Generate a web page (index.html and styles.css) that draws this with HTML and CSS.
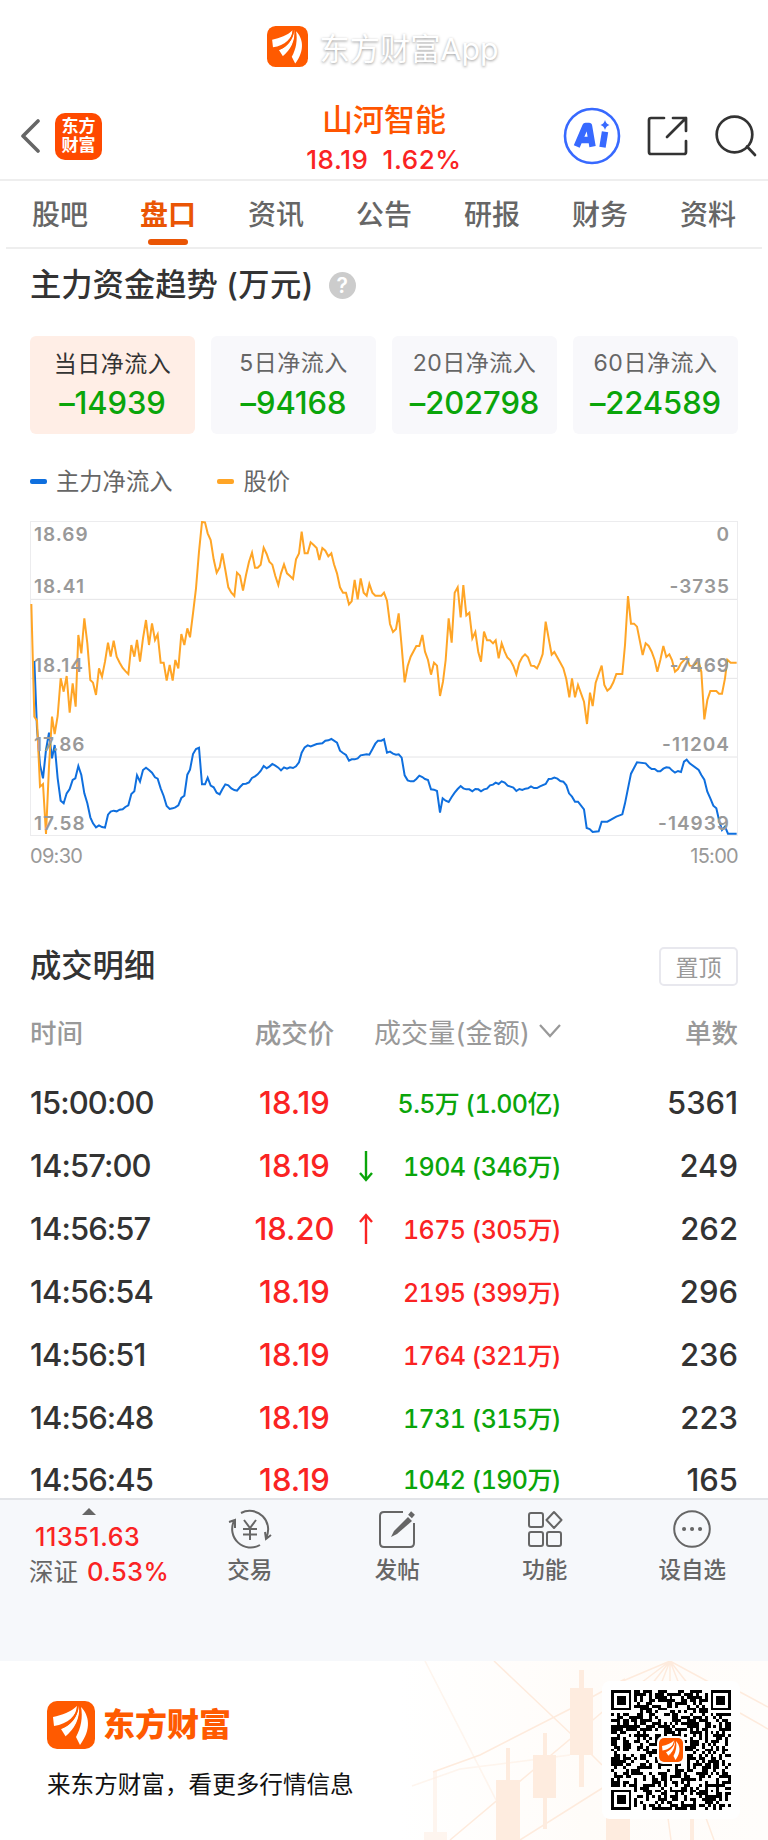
FILE: index.html
```html
<!DOCTYPE html>
<html lang="zh-CN">
  <head>
    <meta charset="UTF-8" />
    <meta name="viewport" content="width=device-width, initial-scale=1.0" />
    <title>山河智能 - 盘口</title>
    <link rel="stylesheet" href="styles.css">
  </head>
  <body>
    <svg class="defs" width="0" height="0">
      <symbol id="logo" viewBox="0 0 48 48">
        <rect width="48" height="48" rx="10" fill="#ff5a00" />
        <path d="M6 16C15 14 24 11 30 5C30 14 21 23 7 25Z" fill="#fff" />
        <path d="M34 6C42 14 45 28 33 44L29 36C34 27 36 16 34 6Z" fill="#fff" />
        <path d="M31.5 5C31 15 24 25 14 28L19 36C29 28 34 15 32 5Z" fill="#fff" />
        <path d="M31 5C30 16 22 25 11 28M33 5C34 18 28 29 18 37" fill="none" stroke="#ff5a00" stroke-width="1.8" />
      </symbol>
    </svg>

    <div class="app-title">
      <svg class="app-logo"><use href="#logo" /></svg>
      <span>东方财富App</span>
    </div>

    <header>
      <div class="header-left">
        <svg width="20" height="34" viewBox="0 0 20 34"><path d="M18 2L3 17L18 32" fill="none" stroke="#666" stroke-width="3.6" stroke-linecap="round" stroke-linejoin="round" /></svg>
        <div class="badge">东方<br />财富</div>
      </div>
      <div class="stock">
        <div class="stock-name">山河智能</div>
        <div class="stock-price"><span>18.19</span><span>1.62%</span></div>
      </div>
      <div class="header-icons">
        <svg width="58" height="58" viewBox="0 0 58 58">
          <circle cx="29" cy="29" r="27" fill="#fff" stroke="#3769ff" stroke-width="2.6" />
          <g fill="none" stroke="#3769ff" stroke-width="6.400" stroke-linecap="square" stroke-linejoin="round">
            <path d="M15 36.500L22.500 19H26L29 36.500M19 33H26" />
            <path d="M41.500 28L40 37" />
          </g>
          <path d="M42 13Q43 17 46.500 18Q43 19 42 23Q41 19 37.500 18Q41 17 42 13Z" fill="#3769ff" />
        </svg>
        <svg width="42" height="42" viewBox="0 0 42 42">
          <path d="M17 3H4Q2 3 2 5V37Q2 39 4 39H37Q39 39 39 37V26M26 3H39V16M39 3L20 22" fill="none" stroke="#333" stroke-width="2.700" stroke-linecap="round" stroke-linejoin="round" />
        </svg>
        <svg width="42" height="42" viewBox="0 0 42 42">
          <circle cx="19.500" cy="19.500" r="17.800" fill="none" stroke="#333" stroke-width="2.700" />
          <path d="M32 31.500L40 40" stroke="#333" stroke-width="2.700" stroke-linecap="round" />
        </svg>
      </div>
    </header>

    <nav>
      <a>股吧</a>
      <a class="active">盘口</a>
      <a>资讯</a>
      <a>公告</a>
      <a>研报</a>
      <a>财务</a>
      <a>资料</a>
    </nav>

    <section class="trend">
      <h2>主力资金趋势 <span class="unit">(万元)</span><span class="help">?</span></h2>
      <div class="cards">
        <div class="card selected"><p>当日净流入</p><strong>–14939</strong></div>
        <div class="card"><p>5日净流入</p><strong>–94168</strong></div>
        <div class="card"><p>20日净流入</p><strong>–202798</strong></div>
        <div class="card"><p>60日净流入</p><strong>–224589</strong></div>
      </div>
      <div class="legend">
        <span class="flow">主力净流入</span>
        <span class="price">股价</span>
      </div>
      <div class="chart">
        <svg width="708" height="315" viewBox="30 33 2124 945" fill="none">
          <path d="M30 268H2154M30 505H2154M30 741H2154" stroke="#e4e4e6" stroke-width="3" />
          <rect x="31.500" y="34.500" width="2121" height="942" stroke="#ececee" stroke-width="3" />
          <polyline class="line-flow" points="43,453 51,655 60,765 69,805 78,720 87,668 96,745 104,705 113,805 122,872 131,880 140,850 149,837 158,810 166,805 175,768 184,795 193,850 202,880 211,922 219,940 228,952 237,946 246,951 255,953 264,914 272,905 281,902 290,904 299,899 308,898 316,891 325,886 334,852 343,844 351,796 360,815 369,780 378,773 387,780 396,788 405,802 413,806 422,835 431,858 440,888 449,897 458,895 466,892 475,886 484,864 493,857 502,794 510,779 519,732 528,717 537,713 546,823 555,823 563,803 572,827 581,832 590,848 599,853 607,838 616,823 625,826 634,835 643,840 651,842 660,831 669,822 678,821 687,817 696,804 705,799 713,793 722,783 731,768 740,775 749,769 757,762 766,767 775,773 783,781 792,772 801,776 810,772 819,774 828,769 837,757 845,728 854,712 863,706 872,709 890,702 907,700 916,692 925,691 934,687 951,698 960,722 969,729 978,735 987,752 995,748 1004,748 1013,745 1022,736 1040,733 1048,734 1057,718 1066,701 1074,692 1084,692 1092,688 1101,728 1110,725 1119,731 1128,734 1136,733 1145,743 1154,796 1163,811 1172,814 1181,814 1189,807 1198,797 1207,801 1215,807 1224,810 1233,838 1242,839 1251,843 1260,908 1268,865 1277,872 1286,876 1295,861 1304,848 1313,837 1322,828 1330,835 1339,838 1348,838 1357,844 1366,837 1375,838 1383,844 1392,838 1401,836 1410,826 1419,824 1427,818 1436,822 1445,814 1454,818 1463,827 1480,833 1489,843 1498,837 1507,840 1516,836 1524,835 1533,829 1542,834 1551,834 1560,829 1577,822 1586,807 1595,806 1603,803 1612,806 1621,813 1630,815 1639,826 1647,850 1656,860 1665,875 1674,875 1692,898 1700,954 1709,957 1718,966 1736,964 1745,935 1762,935 1789,920 1807,913 1815,880 1824,835 1833,791 1842,774 1851,757 1877,760 1886,770 1895,777 1904,777 1913,784 1921,784 1930,776 1939,772 1948,773 1956,781 1965,788 1974,783 1983,786 1992,755 2000,749 2009,760 2036,780 2044,795 2053,809 2062,845 2071,865 2080,887 2089,895 2097,930 2106,960 2115,950 2124,971 2150,971" />
          <polyline class="line-price" points="34,282 43,620 51,632 60,830 69,822 78,972 87,770 96,620 104,672 113,618 122,505 131,545 140,498 149,608 158,520 167,590 175,375 184,430 193,325 202,400 211,510 219,518 228,555 237,475 246,500 255,455 264,398 272,440 281,392 290,440 299,458 308,474 317,484 325,492 334,405 343,440 351,390 360,455 369,385 378,330 387,405 396,340 405,390 413,373 422,458 431,458 440,512 449,465 458,512 466,450 475,475 484,372 493,405 502,355 510,382 519,310 528,235 537,125 546,36 555,37 563,70 572,90 581,148 590,188 599,172 607,130 616,180 625,232 634,248 643,258 651,188 660,197 669,242 678,195 687,155 696,128 705,173 713,173 722,164 731,113 740,132 748,155 757,164 766,198 775,225 783,190 792,163 801,190 810,198 819,207 828,148 837,130 845,65 854,130 863,130 872,97 881,105 890,114 898,150 907,114 916,122 925,139 934,130 942,163 951,190 960,232 969,248 978,248 987,283 995,274 1004,210 1013,268 1022,205 1031,248 1040,257 1048,222 1057,248 1066,257 1084,257 1092,248 1101,272 1110,342 1119,366 1128,357 1136,310 1145,410 1154,517 1163,468 1172,440 1189,408 1198,408 1207,375 1215,425 1224,450 1233,494 1242,458 1251,467 1260,558 1269,515 1277,450 1286,325 1295,398 1304,248 1313,232 1322,322 1330,225 1339,316 1348,308 1357,385 1366,366 1375,427 1383,455 1392,365 1401,391 1410,391 1419,400 1427,391 1436,445 1445,400 1454,425 1462,442 1471,451 1480,468 1489,493 1498,458 1507,441 1515,433 1524,442 1533,467 1542,468 1551,475 1559,458 1568,432 1577,335 1586,385 1595,434 1603,426 1621,458 1630,475 1639,508 1648,562 1656,505 1665,562 1674,525 1692,575 1701,642 1710,548 1718,588 1727,518 1736,492 1745,467 1753,525 1762,542 1771,534 1780,517 1789,492 1807,492 1815,405 1824,258 1833,341 1842,341 1851,350 1868,435 1877,400 1886,408 1895,425 1904,450 1912,485 1921,450 1930,408 1939,441 1948,433 1956,450 1965,485 1974,477 1983,460 2000,442 2009,467 2018,468 2036,455 2044,485 2053,628 2062,570 2071,543 2089,543 2097,551 2106,551 2115,505 2122,449 2132,458 2150,458" />
        </svg>
        <div class="axis axis-left"><span>18.69</span><span>18.41</span><span>18.14</span><span>17.86</span><span>17.58</span></div>
        <div class="axis axis-right"><span>0</span><span>-3735</span><span>-7469</span><span>-11204</span><span>-14939</span></div>
      </div>
      <div class="times"><span>09:30</span><span>15:00</span></div>
    </section>

    <section class="deals">
      <div class="deals-head">
        <h2>成交明细</h2>
        <button>置顶</button>
      </div>
      <table>
        <thead>
          <tr>
            <th class="time">时间</th>
            <th class="deal-price">成交价</th>
            <th class="arrow"></th>
            <th class="volume"><div>成交量(金额)<svg width="22" height="14" viewBox="0 0 22 14"><path d="M1 1L11 12L21 1" fill="none" stroke="#999" stroke-width="2.200" /></svg></div></th>
            <th class="count">单数</th>
          </tr>
        </thead>
        <tbody id="deal-rows"></tbody>
      </table>
    </section>

    <div class="toolbar">
      <div class="index">
        <i class="triangle"></i>
        <div class="index-value">11351.63</div>
        <div class="index-name">深证 <span>0.53%</span></div>
      </div>
      <div class="tool">
        <svg viewBox="0 0 44 40">
          <path d="M13 4A18.500 18.500 0 0 1 38 29M32 36A18.500 18.500 0 0 1 6 12M1 13L7 11V19M43 26L38 30L37 23" />
          <path d="M16 11L22 19L28 11M22 19V31M15 20H29M15 25.500H29" />
        </svg>
        <span>交易</span>
      </div>
      <div class="tool">
        <svg viewBox="0 0 44 40">
          <path d="M28 3H9Q5 3 5 7V34Q5 38 9 38H35Q39 38 39 34V14" />
          <path d="M35 7.500L38 4" stroke-width="5" />
          <path d="M33 8L37 12L22 25L16 28L19 22Z" fill="#666" stroke="none" />
        </svg>
        <span>发帖</span>
      </div>
      <div class="tool">
        <svg viewBox="0 0 44 40">
          <rect x="6" y="4" width="14" height="14" rx="2" />
          <rect x="6" y="23" width="14" height="14" rx="2" />
          <rect x="24" y="23" width="14" height="14" rx="2" />
          <path d="M31 3L38.500 11L31 19L23.500 11Z" stroke-linejoin="round" />
        </svg>
        <span>功能</span>
      </div>
      <div class="tool">
        <svg viewBox="0 0 44 40">
          <circle cx="22" cy="20" r="17.800" />
          <path d="M14 20H14.100M22 20H22.100M30 20H30.100" stroke-width="4" stroke-linecap="round" />
        </svg>
        <span>设自选</span>
      </div>
    </div>

    <footer>
      <svg class="footer-bg" width="368" height="179" viewBox="0 0 368 179">
        <defs>
          <linearGradient id="fade"><stop offset="0" stop-color="#fff" /><stop offset="0.500" stop-color="#fffcf9" /><stop offset="1" stop-color="#fffdfb" /></linearGradient>
        </defs>
        <rect width="368" height="179" fill="url(#fade)" />
        <g fill="none" stroke="#feebdd" stroke-width="1.500">
          <path d="M94 0L170 72L202 104M33 111L80 94L170 48L225 18M50 179L225 32M120 179L204 126M270 0L218 22M270 0L233 28M270 0L248 28M270 0L259 28M270 0V28M270 0L281 28M270 0L292 28M270 0L318 26M340 31L368 46M340 52L368 68M268 157L271 179M306 157L314 179" />
          <path d="M25 0L96 139M12 125L60 108L170 94" opacity="0.500" />
        </g>
        <g fill="#feecdf">
          <path d="M179 9H184V27H193V94H184V126H179V94H170V27H179ZM143 72H147V94H156V137H147V168H143V137H133V94H143ZM106 87H110V119H120V179H96V119H106ZM206 157H230V179H206ZM290 157H294V179H290Z" />
          <path d="M33 110H37V171H47V179H24V171H33Z" opacity="0.500" />
        </g>
      </svg>
      <div class="brand">
        <div class="brand-name"><svg><use href="#logo" /></svg>东方财富</div>
        <p>来东方财富，看更多行情信息</p>
      </div>
      <div class="qr">
        <svg id="qr" width="120" height="120" viewBox="0 0 41 41" shape-rendering="crispEdges"></svg>
        <svg class="qr-logo"><use href="#logo" /></svg>
      </div>
    </footer>

    <script>
      const deals = [
        ["15:00:00", "18.19", "", "5.5万 (1.00亿)", "5361", "down"],
        ["14:57:00", "18.19", "down", "1904 (346万)", "249", "down"],
        ["14:56:57", "18.20", "up", "1675 (305万)", "262", "up"],
        ["14:56:54", "18.19", "", "2195 (399万)", "296", "up"],
        ["14:56:51", "18.19", "", "1764 (321万)", "236", "up"],
        ["14:56:48", "18.19", "", "1731 (315万)", "223", "down"],
        ["14:56:45", "18.19", "", "1042 (190万)", "165", "down"],
      ];
      const arrows = {
        "": "",
        down: '<svg class="down" width="14" height="32" viewBox="0 0 14 32"><path d="M7 1V29M1 23L7 30L13 23" /></svg>',
        up: '<svg class="up" width="14" height="32" viewBox="0 0 14 32"><path d="M7 31V3M1 9L7 2L13 9" /></svg>',
      };
      document.getElementById("deal-rows").innerHTML = deals
        .map(
          ([time, price, arrow, volume, count, side]) => `<tr>
            <td class="time">${time}</td>
            <td class="deal-price">${price}</td>
            <td class="arrow">${arrows[arrow]}</td>
            <td class="volume ${side}">${volume}</td>
            <td class="count">${count}</td>
          </tr>`
        )
        .join("");

      // QR code: three finder squares, one alignment square, data modules between
      const size = 41;
      let seed = 20240;
      let path = "";
      function square(x, y, n, px, py) {
        const d = Math.max(Math.abs(px - x), Math.abs(py - y));
        return d <= n ? d : -1;
      }
      for (let y = 0; y < size; y++) {
        for (let x = 0; x < size; x++) {
          seed = (seed * 1103515245 + 12345) % 2147483648;
          let on = seed / 2147483648 < 0.5;
          [[3, 3], [37, 3], [3, 37]].forEach(([cx, cy]) => {
            const d = square(cx, cy, 4, x, y);
            if (d >= 0) on = d !== 4 && d !== 2;
          });
          const a = square(34, 34, 2, x, y);
          if (a >= 0) on = a !== 1;
          if (on) path += `M${x} ${y}h1v1h-1z`;
        }
      }
      document.getElementById("qr").innerHTML = `<path d="${path}" />`;
    </script>
  </body>
</html>
```
FILE: styles.css
```css
* {
  box-sizing: border-box;
}
body {
  margin: 0;
  width: 768px;
  height: 1840px;
  overflow: hidden;
  display: flex;
  flex-direction: column;
  background: #fff;
  color: #333;
  font-family: Inter, "Noto Sans CJK SC", sans-serif;
}
h2,
p {
  margin: 0;
}
.defs {
  position: absolute;
}
.app-title {
  height: 96px;
  display: flex;
  align-items: center;
  justify-content: center;
  gap: 11px;
  padding: 0 2px 3px 0;
  font-size: 30.300px;
  color: #fff;
  text-shadow: 0 1px 3px rgba(0, 0, 0, 0.4);
}
.app-logo {
  width: 41px;
  height: 41px;
}
header {
  height: 85px;
  display: grid;
  grid-template-columns: 1fr 200px 1fr;
  align-items: center;
  border-bottom: 2px solid #eee;
}
.header-left {
  display: flex;
  align-items: center;
  gap: 15px;
  padding-left: 20px;
  margin-top: -3px;
}
.badge {
  width: 47px;
  height: 47px;
  padding-top: 4px;
  border-radius: 10px;
  background: #ff4a00;
  color: #fff;
  font-size: 17px;
  line-height: 19px;
  font-weight: 700;
  text-align: center;
}
.stock {
  padding-top: 3px;
  text-align: center;
}
.stock-name {
  font-size: 31px;
  line-height: 42px;
  font-weight: 500;
  color: #ff5500;
}
.stock-price {
  display: flex;
  justify-content: center;
  gap: 14px;
  font-size: 26px;
  line-height: 38px;
  font-weight: 500;
  letter-spacing: 0.6px;
  color: #fa2323;
}
.header-icons {
  display: flex;
  align-items: center;
  justify-content: flex-end;
  gap: 26px;
  padding-right: 11px;
  margin-top: -3px;
}
nav {
  height: 68px;
  margin: 0 6px;
  display: flex;
  border-bottom: 2px solid #eee;
}
nav a {
  position: relative;
  flex: 1;
  text-align: center;
  font-size: 28px;
  line-height: 68px;
  font-weight: 500;
  color: #666;
}
nav .active {
  color: #ea5504;
  font-weight: 700;
}
nav .active::after {
  content: "";
  position: absolute;
  left: 50%;
  bottom: 2px;
  width: 40px;
  height: 6px;
  margin-left: -20px;
  border-radius: 3px;
  background: #ea5504;
}
h2 {
  font-size: 31.300px;
  line-height: 40px;
  font-weight: 500;
}
.trend {
  height: 697px;
  padding: 16px 30px 0;
}
.trend h2 {
  display: flex;
  align-items: center;
  height: 40px;
  white-space: pre;
}
.unit {
  letter-spacing: 0.5px;
}
.help {
  width: 27px;
  height: 27px;
  margin-left: 15px;
  border-radius: 50%;
  background: #ccc;
  color: #fff;
  font-size: 21px;
  line-height: 27px;
  font-weight: 600;
  text-align: center;
}
.cards {
  display: grid;
  grid-template-columns: repeat(4, 1fr);
  gap: 16px;
  margin-top: 31px;
}
.card {
  height: 98px;
  padding-top: 10px;
  border-radius: 6px;
  background: #f8f8fb;
  text-align: center;
}
.card p {
  font-size: 23px;
  line-height: 34px;
  letter-spacing: 0.5px;
  color: #666;
}
.card strong {
  display: block;
  font-size: 31px;
  line-height: 46px;
  font-weight: 500;
  letter-spacing: -0.1px;
  color: #0aa50a;
}
.card.selected {
  background: #ffeee6;
}
.card.selected p {
  position: relative;
  top: 1px;
  color: #333;
}
.legend {
  display: flex;
  gap: 45px;
  margin-top: 31px;
  font-size: 23.300px;
  line-height: 34px;
  color: #666;
}
.legend span::before {
  content: "";
  display: inline-block;
  width: 17px;
  height: 5px;
  margin-right: 9px;
  border-radius: 2px;
  vertical-align: 6px;
}
.flow::before {
  background: #0f6fde;
}
.price::before {
  background: #ffa526;
}
.chart {
  position: relative;
  height: 315px;
  margin-top: 22px;
}
.line-flow {
  stroke: #0f6fde;
  stroke-width: 6;
}
.line-price {
  stroke: #ffa526;
  stroke-width: 6;
}
/* value labels lie over the lines */
.axis {
  position: absolute;
  top: 0;
  bottom: 0;
  display: flex;
  flex-direction: column;
  font-size: 19px;
  line-height: 28px;
  font-weight: 600;
  letter-spacing: 1px;
  color: #999;
}
.axis span {
  margin-bottom: 51px;
}
.axis span:first-child {
  margin-bottom: 24px;
}
.axis-left {
  left: 4px;
}
.axis-right {
  right: 8px;
  text-align: right;
}
.times {
  display: flex;
  justify-content: space-between;
  margin-top: 6px;
  font-size: 20px;
  line-height: 28px;
  letter-spacing: -0.700px;
  color: #999;
}
.deals {
  height: 552px;
  padding: 0 30px;
}
.deals-head {
  display: flex;
  justify-content: space-between;
  align-items: center;
  height: 40px;
}
button {
  width: 79px;
  height: 39px;
  padding: 0;
  border: 2px solid #e8e8ee;
  border-radius: 5px;
  background: #fff;
  color: #999;
  font: 23px/33px "Noto Sans CJK SC", sans-serif;
}
table {
  width: 708px;
  margin-top: 15px;
  table-layout: fixed;
  border-collapse: collapse;
}
th,
td {
  height: 63px;
  padding: 0;
  font-weight: 500;
  font-size: 31px;
  text-align: left;
}
th {
  height: 62px;
  padding-bottom: 2px;
  font-size: 26.500px;
  color: #999;
}
tbody tr:first-child td {
  height: 71px;
  padding-top: 8px;
}
tbody tr:last-child td {
  height: 49px;
  padding: 13px 0 0;
  line-height: 36px;
  vertical-align: top;
}
.time {
  width: 208px;
}
td.time {
  letter-spacing: -0.9px;
}
.deal-price {
  width: 113px;
  text-align: center;
}
td.deal-price {
  color: #fa2323;
}
.arrow {
  width: 30px;
  text-align: center;
}
.arrow svg {
  display: block;
  margin: 0 auto;
  fill: none;
  stroke: currentColor;
  stroke-width: 2.400px;
}
.volume {
  width: 180px;
  text-align: right;
  white-space: nowrap;
}
td.volume {
  padding-bottom: 2px;
  font-size: 25px;
  font-variant-numeric: tabular-nums;
  letter-spacing: -0.6px;
}
th.volume {
  font-weight: 400;
}
.volume div {
  display: flex;
  align-items: center;
  justify-content: flex-end;
  gap: 9px;
  font-size: 27px;
  letter-spacing: 0.2px;
}
.volume div svg {
  flex: none;
}
.count {
  text-align: right;
}
.up {
  color: #fa2323;
}
.down {
  color: #0aa50a;
}
.toolbar {
  height: 163px;
  flex: none;
  display: flex;
  padding-top: 8px;
  border-top: 2px solid #e2e4e8;
  background: #f6f8fb;
  color: #666;
}
.index {
  width: 176px;
  padding-left: 29px;
  font-weight: 500;
}
.triangle {
  display: block;
  width: 0;
  margin-left: 53px;
  border: 7px solid transparent;
  border-top: 0;
  border-bottom-color: #666;
}
.index-value {
  margin: 5px 0 0 6px;
  font-size: 25px;
  line-height: 35px;
  letter-spacing: 0.6px;
  color: #fa2323;
}
.index-name {
  margin-top: -1px;
  font-size: 24.500px;
  line-height: 36px;
  font-weight: 400;
  white-space: nowrap;
}
.index-name span {
  margin-left: 2px;
  font-size: 25.500px;
  font-weight: 500;
  letter-spacing: 0.4px;
  color: #fa2323;
}
.tool {
  width: 147.500px;
  display: flex;
  flex-direction: column;
  align-items: center;
  font-size: 22.500px;
  line-height: 34px;
  font-weight: 500;
}
.tool svg {
  width: 44px;
  height: 40px;
  margin: 1px 0 4px;
  fill: none;
  stroke: #666;
  stroke-width: 2;
}
footer {
  position: relative;
  height: 179px;
  flex: none;
  display: flex;
  justify-content: space-between;
  padding: 0 28px 0 47px;
}
.footer-bg {
  position: absolute;
  right: 0;
  top: 0;
}
.brand {
  padding-top: 40px;
}
.brand-name {
  display: flex;
  align-items: center;
  gap: 8px;
  font-size: 32px;
  line-height: 48px;
  font-weight: 900;
  color: #ff5a00;
}
.brand-name svg {
  width: 48px;
  height: 48px;
}
.brand p {
  margin-top: 19px;
  font-size: 23.600px;
  line-height: 34px;
  color: #111;
}
.qr {
  position: relative;
  width: 138px;
  height: 138px;
  margin-top: 20px;
  padding: 9px;
  border-radius: 8px;
  background: #fff;
}
.qr-logo {
  position: absolute;
  left: 55px;
  top: 55px;
  width: 28px;
  height: 28px;
  border: 2px solid #fff;
  border-radius: 6px;
  background: #fff;
}
```
